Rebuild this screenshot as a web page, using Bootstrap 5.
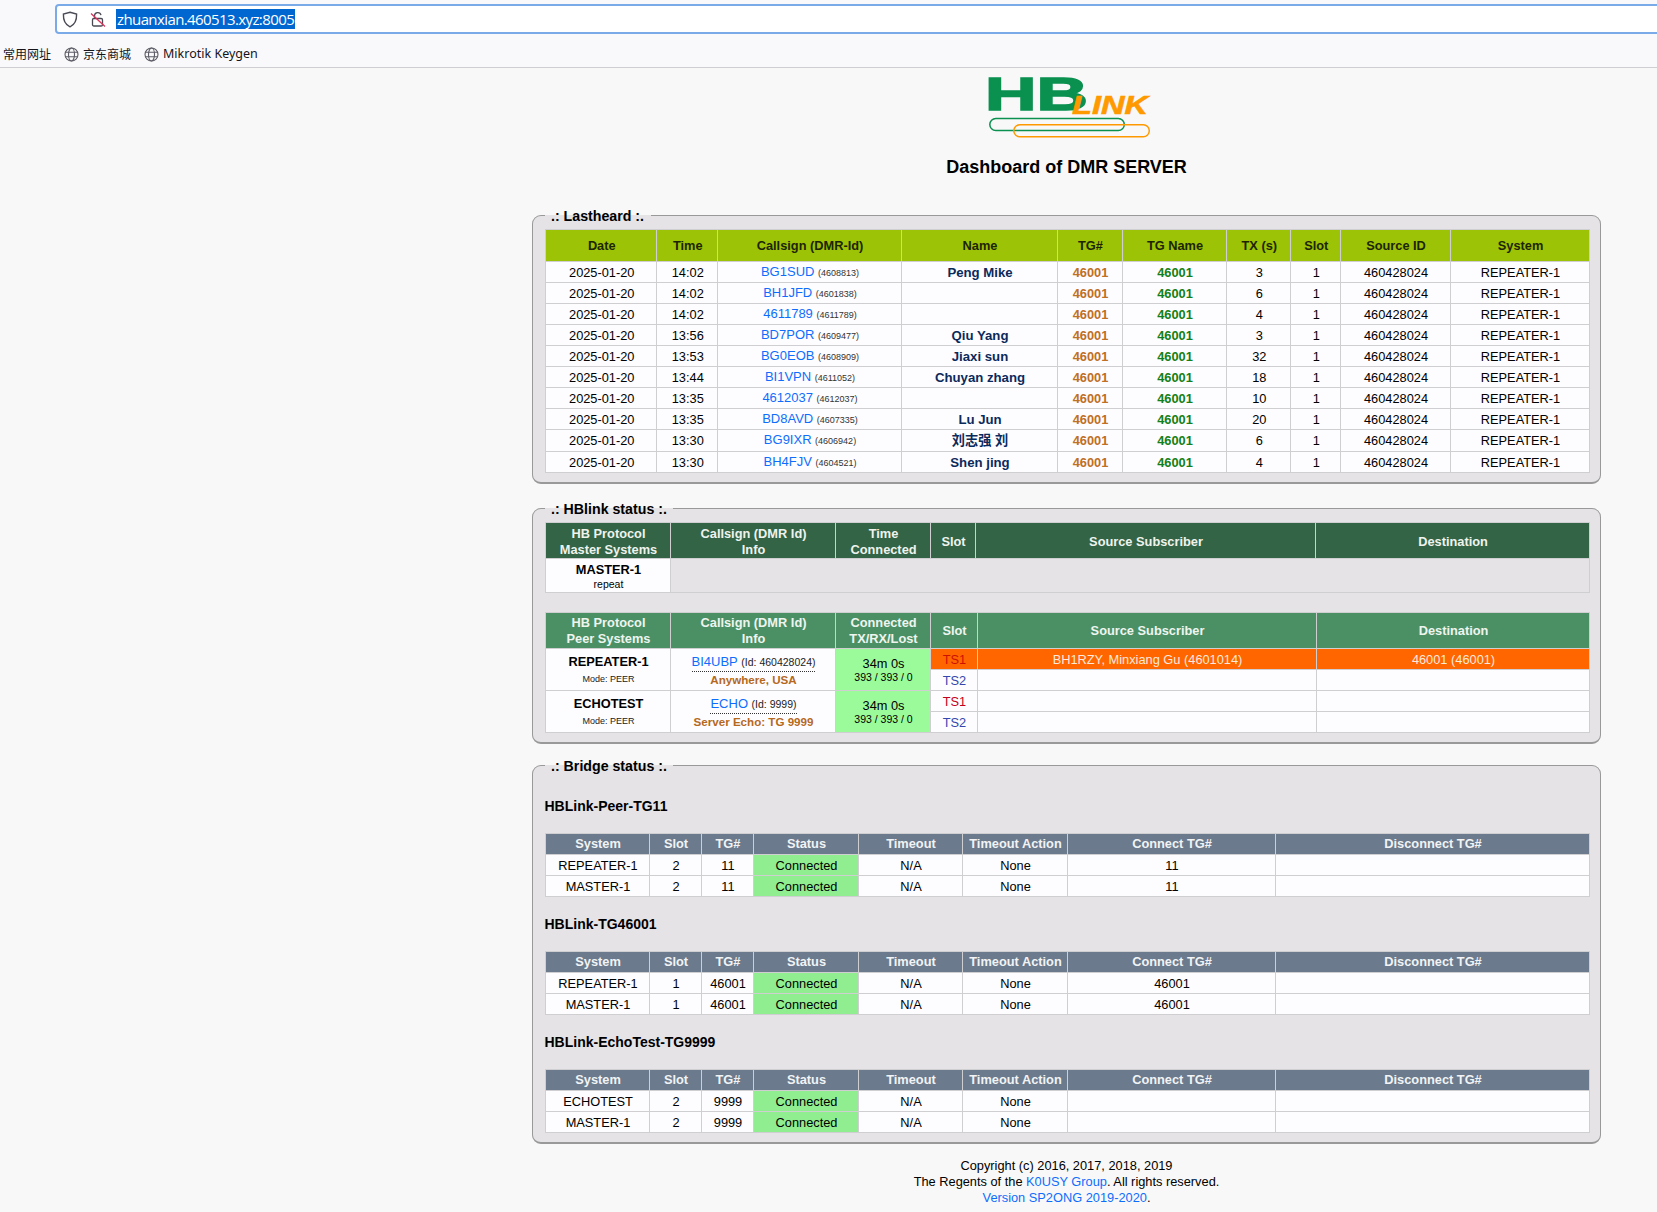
<!DOCTYPE html>
<html lang="zh-CN">
<head>
<meta charset="utf-8">
<title>HBlink Dashboard</title>
<link href="https://cdn.jsdelivr.net/npm/bootstrap@5.3.0/dist/css/bootstrap.min.css" rel="stylesheet">
<style>
body{background:#f8f8f8;font-family:"Liberation Sans",Arial,"Noto Sans CJK SC",sans-serif;font-size:12.8px;color:#000;overflow-x:hidden}
.tool-wrap{background:#f9f9fb;border-bottom:1px solid #cfcfd3;height:68px;overflow:hidden;font-family:"Noto Sans","Noto Sans CJK SC",sans-serif}
.url-row{height:38px;padding:4px 0 4px 55px}
.url-box{height:30px;margin-right:-10px;background:#fff;border:2px solid #7aaae8;border-radius:4px;padding-left:5px}
.url-sel{background:#0066d0;color:#fff;font-size:15px;line-height:20px;padding:0 1px;font-family:"Open Sans","Noto Sans",sans-serif;letter-spacing:-.6px}
.ico-gap{margin-right:12px}
.ico-gap-end{margin-right:10px}
.mark-row{height:29px;padding:4px 0 0 3px;font-size:12.5px;color:#15141a}
.mark-item{gap:4px;margin-right:13px}
.mark-cjk{font-size:12px}
.page-col{margin-left:532px;width:1069px}
.logo-svg{margin-left:436px;overflow:visible}
.dash-title{font-size:18px;line-height:23px;font-weight:700;margin:17px 0 28px;color:#000}
.panel-box{background:#e5e3e6;border:1px solid #999;border-bottom-width:2px;border-radius:9px;padding:6px 10.5px 9px 11.5px;min-width:0;margin:0 0 16px}
.panel-status{margin-bottom:13px}
.panel-box legend{float:none;width:auto;font-size:14.2px;line-height:18px;height:16px;font-weight:700;padding:0 6.5px;margin:0}
.panel-bridge{padding-top:6px;padding-bottom:9px;margin-bottom:14px}
.hbt{table-layout:fixed;--bs-table-bg:#fdfcfe;--bs-table-border-color:#cfcfd2;--bs-table-color:#000;--bs-body-color:#000;border-collapse:collapse;width:100%;margin:0;line-height:15px}
.hbt>:not(caption)>*>*{padding:0 0 0 2px;border:1px solid #cfcfd2;text-align:center;vertical-align:middle;font-size:12.8px;box-shadow:none}
.hbt thead th{font-weight:700;line-height:16px}
.hbt-last thead th{background:#9cc305;color:#1c2500;height:32px}
.hbt-last tbody tr{height:21px}
.hbt-last tbody tr.row-cjk{height:22px}
.hbt-master thead th{background:#336445;color:#eef3ee;height:36px;padding-top:2px}
.hbt-master tbody tr{height:34px}
.hbt-master tbody .c-sys{padding-top:2px}
.hbt-peer thead th{background:#4b9065;color:#eef5ef;height:36px}
.hbt-bridge thead th{background:#6b7a8c;color:#f1f3f5;height:21px}
.hbt-bridge tbody tr{height:21px}
.hbt-peer tbody tr{height:21px}
.hbt-last col:nth-child(1){width:111.5px}.hbt-last col:nth-child(2){width:60.5px}.hbt-last col:nth-child(3){width:184px}.hbt-last col:nth-child(4){width:156px}.hbt-last col:nth-child(5){width:65px}.hbt-last col:nth-child(6){width:104px}.hbt-last col:nth-child(7){width:64.5px}.hbt-last col:nth-child(8){width:49.5px}.hbt-last col:nth-child(9){width:110px}.hbt-last col:nth-child(10){width:139px}
.hbt-master col:nth-child(1),.hbt-peer col:nth-child(1){width:125px}
.hbt-master col:nth-child(2),.hbt-peer col:nth-child(2){width:165px}
.hbt-master col:nth-child(3),.hbt-peer col:nth-child(3){width:95px}
.hbt-master col:nth-child(4){width:45px}.hbt-peer col:nth-child(4){width:47px}
.hbt-master col:nth-child(5){width:340px}.hbt-peer col:nth-child(5){width:339px}
.hbt-bridge col:nth-child(1){width:104px}.hbt-bridge col:nth-child(2),.hbt-bridge col:nth-child(3){width:52px}.hbt-bridge col:nth-child(4){width:105px}.hbt-bridge col:nth-child(5){width:104px}.hbt-bridge col:nth-child(6){width:105px}.hbt-bridge col:nth-child(7){width:208px}
.hbt a{text-decoration:none;color:#0d6efd;font-size:13px}
.id-tiny{font-size:9px;color:#333}
.hbt .c-name{font-weight:700;color:#0b2a5c;font-size:13.2px}
.hbt .c-tg{font-weight:700;color:#bf6f26;font-size:12.8px}
.hbt .c-tgn{font-weight:700;color:#158015}
.hbt .c-empty{background:#e5e3e6}
.hbt .c-sys{font-weight:700;line-height:14px}
.hbt-peer .c-sys{padding-top:2px}
.sub-note{font-weight:400;font-size:10.5px;display:block;line-height:14px}
.mode-note{font-weight:400;font-size:9px;display:block;line-height:14px;margin-top:3px;color:#222}
.peer-line{display:inline-block;border-bottom:1px dotted #333;line-height:17px}
.id-mid{font-size:10.5px;color:#222}
.loc-note{display:block;font-weight:700;font-size:11.6px;color:#b5691f;line-height:15px}
.hbt .c-conn{background:#9bfb9b}
.conn-small{display:block;font-size:10.5px;line-height:13px}
.hbt .c-on{background:#ff6600;color:#ffe9dc}
.hbt .ts-on{background:#ff6600;color:#cc1100}
.hbt .ts-one{color:#c40020}
.hbt .ts-two{color:#3348ae}
.hbt .c-ok{background:#90ee90}
.gap-tables{height:19px}
.bridge-name{height:54px;font-size:14px;font-weight:700;margin:0;color:#000}
.foot-note{line-height:16px;font-size:12.8px}
.foot-note a{text-decoration:none;color:#0d6efd}
</style>
</head>
<body>
<header class="tool-wrap">
  <div class="url-row">
    <div class="url-box d-flex align-items-center">
      <svg class="ico-gap" width="16" height="17" viewBox="0 0 16 17" fill="none" stroke="#4a4a55" stroke-width="1.4"><path d="M8 1.2 14.6 3c.2 5.6-1.5 10.5-6.6 12.8C2.900 13.500 1.200 8.600 1.400 3z"/></svg>
      <svg class="ico-gap-end" width="16" height="17" viewBox="0 0 16 17" fill="none" stroke="#4a4a55" stroke-width="1.3"><path d="M4.500 7.500V4.800a3.300 3.300 0 0 1 6.500-.6"/><rect x="2.500" y="7.500" width="10" height="7.500" rx="1.300"/><path d="M1 2.500 15 15.500" stroke="#e0315a" stroke-width="1.300"/></svg>
      <span class="url-sel">zhuanxian.460513.xyz:8005</span>
    </div>
  </div>
  <nav class="mark-row d-flex align-items-center">
    <span class="mark-item mark-cjk">常用网址</span>
    <span class="mark-item mark-cjk d-inline-flex align-items-center"><svg width="15" height="15" viewBox="0 0 15 15" fill="none" stroke="#5b5b66" stroke-width="1.100"><circle cx="7.500" cy="7.500" r="6.500"/><ellipse cx="7.500" cy="7.500" rx="3" ry="6.500"/><path d="M1.200 5.300h12.600M1.200 9.700h12.600"/></svg>京东商城</span>
    <span class="mark-item d-inline-flex align-items-center"><svg width="15" height="15" viewBox="0 0 15 15" fill="none" stroke="#5b5b66" stroke-width="1.100"><circle cx="7.500" cy="7.500" r="6.500"/><ellipse cx="7.500" cy="7.500" rx="3" ry="6.500"/><path d="M1.200 5.300h12.600M1.200 9.700h12.600"/></svg>Mikrotik Keygen</span>
  </nav>
</header>
<main class="page-col">
  <svg class="logo-svg d-block" width="190" height="71" viewBox="0 0 190 71" fill="none">
    <text x="17" y="42" font-family="Liberation Sans" font-weight="700" font-size="46" fill="#0a9150" stroke="#0a9150" stroke-width="1.500" textLength="103" lengthAdjust="spacingAndGlyphs">HB</text>
    <text x="104" y="46" font-family="Liberation Sans" font-weight="700" font-style="italic" font-size="25" fill="#ff9900" stroke="#ff9900" stroke-width=".6" textLength="76" lengthAdjust="spacingAndGlyphs">LINK</text>
    <rect x="21.800" y="50.500" width="134.500" height="12" rx="6" stroke="#0a9150" stroke-width="1.500"/>
    <rect x="45.800" y="56.800" width="135.500" height="12" rx="6" stroke="#ff9900" stroke-width="1.500"/>
  </svg>
  <h1 class="dash-title text-center">Dashboard of DMR SERVER</h1>

  <fieldset class="panel-box">
    <legend>.: Lastheard :.</legend>
    <table class="table hbt hbt-last">
      <colgroup><col><col><col><col><col><col><col><col><col><col></colgroup>
      <thead><tr><th>Date</th><th>Time</th><th>Callsign (DMR-Id)</th><th>Name</th><th>TG#</th><th>TG Name</th><th>TX (s)</th><th>Slot</th><th>Source ID</th><th>System</th></tr></thead>
      <tbody>
        <tr><td>2025-01-20</td><td>14:02</td><td><a href="#">BG1SUD</a> <span class="id-tiny">(4608813)</span></td><td class="c-name">Peng Mike</td><td class="c-tg">46001</td><td class="c-tgn">46001</td><td>3</td><td>1</td><td>460428024</td><td>REPEATER-1</td></tr>
        <tr><td>2025-01-20</td><td>14:02</td><td><a href="#">BH1JFD</a> <span class="id-tiny">(4601838)</span></td><td class="c-name"></td><td class="c-tg">46001</td><td class="c-tgn">46001</td><td>6</td><td>1</td><td>460428024</td><td>REPEATER-1</td></tr>
        <tr><td>2025-01-20</td><td>14:02</td><td><a href="#">4611789</a> <span class="id-tiny">(4611789)</span></td><td class="c-name"></td><td class="c-tg">46001</td><td class="c-tgn">46001</td><td>4</td><td>1</td><td>460428024</td><td>REPEATER-1</td></tr>
        <tr><td>2025-01-20</td><td>13:56</td><td><a href="#">BD7POR</a> <span class="id-tiny">(4609477)</span></td><td class="c-name">Qiu Yang</td><td class="c-tg">46001</td><td class="c-tgn">46001</td><td>3</td><td>1</td><td>460428024</td><td>REPEATER-1</td></tr>
        <tr><td>2025-01-20</td><td>13:53</td><td><a href="#">BG0EOB</a> <span class="id-tiny">(4608909)</span></td><td class="c-name">Jiaxi sun</td><td class="c-tg">46001</td><td class="c-tgn">46001</td><td>32</td><td>1</td><td>460428024</td><td>REPEATER-1</td></tr>
        <tr><td>2025-01-20</td><td>13:44</td><td><a href="#">BI1VPN</a> <span class="id-tiny">(4611052)</span></td><td class="c-name">Chuyan zhang</td><td class="c-tg">46001</td><td class="c-tgn">46001</td><td>18</td><td>1</td><td>460428024</td><td>REPEATER-1</td></tr>
        <tr><td>2025-01-20</td><td>13:35</td><td><a href="#">4612037</a> <span class="id-tiny">(4612037)</span></td><td class="c-name"></td><td class="c-tg">46001</td><td class="c-tgn">46001</td><td>10</td><td>1</td><td>460428024</td><td>REPEATER-1</td></tr>
        <tr><td>2025-01-20</td><td>13:35</td><td><a href="#">BD8AVD</a> <span class="id-tiny">(4607335)</span></td><td class="c-name">Lu Jun</td><td class="c-tg">46001</td><td class="c-tgn">46001</td><td>20</td><td>1</td><td>460428024</td><td>REPEATER-1</td></tr>
        <tr class="row-cjk"><td>2025-01-20</td><td>13:30</td><td><a href="#">BG9IXR</a> <span class="id-tiny">(4606942)</span></td><td class="c-name">刘志强 刘</td><td class="c-tg">46001</td><td class="c-tgn">46001</td><td>6</td><td>1</td><td>460428024</td><td>REPEATER-1</td></tr>
        <tr><td>2025-01-20</td><td>13:30</td><td><a href="#">BH4FJV</a> <span class="id-tiny">(4604521)</span></td><td class="c-name">Shen jing</td><td class="c-tg">46001</td><td class="c-tgn">46001</td><td>4</td><td>1</td><td>460428024</td><td>REPEATER-1</td></tr>
      </tbody>
    </table>
  </fieldset>

  <fieldset class="panel-box panel-status">
    <legend>.: HBlink status :.</legend>
    <table class="table hbt hbt-master">
      <colgroup><col><col><col><col><col><col></colgroup>
      <thead><tr><th>HB Protocol<br>Master Systems</th><th>Callsign (DMR Id)<br>Info</th><th>Time<br>Connected</th><th>Slot</th><th>Source Subscriber</th><th>Destination</th></tr></thead>
      <tbody><tr><td class="c-sys">MASTER-1<span class="sub-note">repeat</span></td><td class="c-empty" colspan="5"></td></tr></tbody>
    </table>
    <div class="gap-tables"></div>
    <table class="table hbt hbt-peer">
      <colgroup><col><col><col><col><col><col></colgroup>
      <thead><tr><th>HB Protocol<br>Peer Systems</th><th>Callsign (DMR Id)<br>Info</th><th>Connected<br>TX/RX/Lost</th><th>Slot</th><th>Source Subscriber</th><th>Destination</th></tr></thead>
      <tbody>
        <tr><td class="c-sys" rowspan="2">REPEATER-1<span class="mode-note">Mode: PEER</span></td><td rowspan="2"><span class="peer-line"><a href="#">BI4UBP</a> <span class="id-mid">(Id: 460428024)</span></span><span class="loc-note">Anywhere, USA</span></td><td class="c-conn" rowspan="2">34m 0s<span class="conn-small">393 / 393 / 0</span></td><td class="ts-on">TS1</td><td class="c-on">BH1RZY, Minxiang Gu (4601014)</td><td class="c-on">46001 (46001)</td></tr>
        <tr><td class="ts-two">TS2</td><td></td><td></td></tr>
        <tr><td class="c-sys" rowspan="2">ECHOTEST<span class="mode-note">Mode: PEER</span></td><td rowspan="2"><span class="peer-line"><a href="#">ECHO</a> <span class="id-mid">(Id: 9999)</span></span><span class="loc-note">Server Echo: TG 9999</span></td><td class="c-conn" rowspan="2">34m 0s<span class="conn-small">393 / 393 / 0</span></td><td class="ts-one">TS1</td><td></td><td></td></tr>
        <tr><td class="ts-two">TS2</td><td></td><td></td></tr>
      </tbody>
    </table>
  </fieldset>

  <fieldset class="panel-box panel-bridge">
    <legend>.: Bridge status :.</legend>
    <h2 class="bridge-name d-flex align-items-center">HBLink-Peer-TG11</h2>
    <table class="table hbt hbt-bridge">
      <colgroup><col><col><col><col><col><col><col><col></colgroup>
      <thead><tr><th>System</th><th>Slot</th><th>TG#</th><th>Status</th><th>Timeout</th><th>Timeout Action</th><th>Connect TG#</th><th>Disconnect TG#</th></tr></thead>
      <tbody>
        <tr><td>REPEATER-1</td><td>2</td><td>11</td><td class="c-ok">Connected</td><td>N/A</td><td>None</td><td>11</td><td></td></tr>
        <tr><td>MASTER-1</td><td>2</td><td>11</td><td class="c-ok">Connected</td><td>N/A</td><td>None</td><td>11</td><td></td></tr>
      </tbody>
    </table>
    <h2 class="bridge-name d-flex align-items-center">HBLink-TG46001</h2>
    <table class="table hbt hbt-bridge">
      <colgroup><col><col><col><col><col><col><col><col></colgroup>
      <thead><tr><th>System</th><th>Slot</th><th>TG#</th><th>Status</th><th>Timeout</th><th>Timeout Action</th><th>Connect TG#</th><th>Disconnect TG#</th></tr></thead>
      <tbody>
        <tr><td>REPEATER-1</td><td>1</td><td>46001</td><td class="c-ok">Connected</td><td>N/A</td><td>None</td><td>46001</td><td></td></tr>
        <tr><td>MASTER-1</td><td>1</td><td>46001</td><td class="c-ok">Connected</td><td>N/A</td><td>None</td><td>46001</td><td></td></tr>
      </tbody>
    </table>
    <h2 class="bridge-name d-flex align-items-center">HBLink-EchoTest-TG9999</h2>
    <table class="table hbt hbt-bridge">
      <colgroup><col><col><col><col><col><col><col><col></colgroup>
      <thead><tr><th>System</th><th>Slot</th><th>TG#</th><th>Status</th><th>Timeout</th><th>Timeout Action</th><th>Connect TG#</th><th>Disconnect TG#</th></tr></thead>
      <tbody>
        <tr><td>ECHOTEST</td><td>2</td><td>9999</td><td class="c-ok">Connected</td><td>N/A</td><td>None</td><td></td><td></td></tr>
        <tr><td>MASTER-1</td><td>2</td><td>9999</td><td class="c-ok">Connected</td><td>N/A</td><td>None</td><td></td><td></td></tr>
      </tbody>
    </table>
  </fieldset>

  <footer class="foot-note text-center">
    Copyright (c) 2016, 2017, 2018, 2019<br>
    The Regents of the <a href="#">K0USY Group</a>. All rights reserved.<br>
    <a href="#">Version SP2ONG 2019-2020</a>.
  </footer>
</main>
<script src="https://cdn.jsdelivr.net/npm/bootstrap@5.3.0/dist/js/bootstrap.bundle.min.js"></script>
</body>
</html>
